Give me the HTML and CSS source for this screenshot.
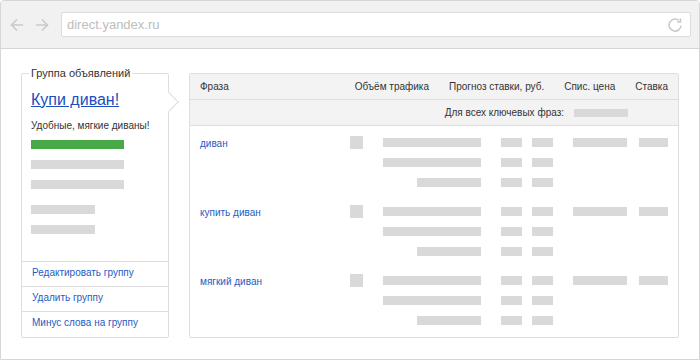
FILE: index.html
```html
<!DOCTYPE html>
<html lang="ru">
<head>
  <meta charset="UTF-8">
  <title>Яндекс.Директ — группа объявлений</title>
  <link rel="stylesheet" href="styles.css">
</head>
<body>
  <div class="browser">
    <header class="toolbar">
      <span class="nav-btn">
        <svg width="14" height="14" viewBox="0 0 14 14"><path d="M7 1.5 L1.5 7 L7 12.5 M1.5 7 H13" /></svg>
      </span>
      <span class="nav-btn">
        <svg width="14" height="14" viewBox="0 0 14 14"><path d="M7 1.5 L12.5 7 L7 12.5 M12.5 7 H1" /></svg>
      </span>
      <div class="address">
        <span class="url">direct.yandex.ru</span>
        <svg class="reload" width="16" height="16" viewBox="0 0 16 16"><path d="M14 8.5 A6 6 0 1 1 11.8 3.4 M13.5 1.5 V5 H10" /></svg>
      </div>
    </header>

    <main class="page">
      <!-- left: ad group card -->
      <aside class="group-card">
        <span class="group-legend">Группа объявлений</span>
        <div class="ad-preview">
          <a class="ad-title" href="#">Купи диван!</a>
          <p class="ad-text">Удобные, мягкие диваны!</p>
          <div class="stub stub-green"></div>
          <div class="stub"></div>
          <div class="stub"></div>
          <div class="stub stub-short stub-gap"></div>
          <div class="stub stub-short"></div>
        </div>
        <ul class="group-actions">
          <li><a href="#">Редактировать группу</a></li>
          <li><a href="#">Удалить группу</a></li>
          <li><a href="#">Минус слова на группу</a></li>
        </ul>
      </aside>

      <!-- right: phrases table -->
      <section class="phrases">
        <div class="phrases-head">
          <span>Фраза</span>
          <div class="head-cols">
            <span>Объём трафика</span>
            <span>Прогноз ставки, руб.</span>
            <span>Спис. цена</span>
            <span>Ставка</span>
          </div>
        </div>
        <div class="phrases-all">
          <span>Для всех ключевых фраз:</span>
          <span class="bar bar-price"></span>
        </div>

        <div class="phrases-body">
          <div class="kw-group">
            <a class="kw" href="#">диван</a>
            <span class="kw-check"></span>
            <span class="bar bar-traffic"></span>
            <span class="bar bar-bid"></span>
            <span class="bar bar-bid"></span>
            <span class="bar bar-price"></span>
            <span class="bar bar-rate"></span>
            <span class="bar bar-traffic new-line"></span>
            <span class="bar bar-bid"></span>
            <span class="bar bar-bid"></span>
            <span class="bar bar-traffic short new-line"></span>
            <span class="bar bar-bid"></span>
            <span class="bar bar-bid"></span>
          </div>
          <div class="kw-group">
            <a class="kw" href="#">купить диван</a>
            <span class="kw-check"></span>
            <span class="bar bar-traffic"></span>
            <span class="bar bar-bid"></span>
            <span class="bar bar-bid"></span>
            <span class="bar bar-price"></span>
            <span class="bar bar-rate"></span>
            <span class="bar bar-traffic new-line"></span>
            <span class="bar bar-bid"></span>
            <span class="bar bar-bid"></span>
            <span class="bar bar-traffic short new-line"></span>
            <span class="bar bar-bid"></span>
            <span class="bar bar-bid"></span>
          </div>
          <div class="kw-group">
            <a class="kw" href="#">мягкий диван</a>
            <span class="kw-check"></span>
            <span class="bar bar-traffic"></span>
            <span class="bar bar-bid"></span>
            <span class="bar bar-bid"></span>
            <span class="bar bar-price"></span>
            <span class="bar bar-rate"></span>
            <span class="bar bar-traffic new-line"></span>
            <span class="bar bar-bid"></span>
            <span class="bar bar-bid"></span>
            <span class="bar bar-traffic short new-line"></span>
            <span class="bar bar-bid"></span>
            <span class="bar bar-bid"></span>
          </div>
        </div>
      </section>
    </main>
  </div>
</body>
</html>
```

FILE: styles.css
```css
:root {
  --frame-border: #d6d6d6;
  --line-color: #dedede;
  --toolbar-bg: #f1f1f1;
  --head-bg: #f3f3f3;
  --stub-color: #d9d9d9;
  --green: #47a947;
  --link-color: #1f5bc4;
  --text-color: #333;
}

* {
  margin: 0;
  padding: 0;
  box-sizing: border-box;
}

body {
  font-family: "Liberation Sans", Arial, sans-serif;
  color: var(--text-color);
  background: #fff;
}

a {
  color: var(--link-color);
  text-decoration: none;
}

.browser {
  width: 700px;
  height: 360px;
  border: 1px solid var(--frame-border);
  border-radius: 4px 4px 0 0;
  display: flex;
  flex-direction: column;
  overflow: hidden;
}

/* browser chrome */
.toolbar {
  height: 48px;
  flex: none;
  display: flex;
  align-items: center;
  padding: 0 8px 0 9px;
  background: var(--toolbar-bg);
  border-bottom: 1px solid var(--frame-border);
}

.nav-btn {
  display: flex;
  width: 14px;
  height: 14px;
  margin-right: 11px;
}

.nav-btn + .nav-btn {
  margin-right: 12px;
}

.nav-btn path,
.reload path {
  fill: none;
  stroke: #cacaca;
  stroke-width: 1.6;
}

.address {
  flex: 1;
  height: 25px;
  display: flex;
  align-items: center;
  justify-content: space-between;
  padding: 0 7px 0 5px;
  background: #fff;
  border: 1px solid #dcdcdc;
  border-radius: 2px;
}

.url {
  font-size: 13px;
  color: #bdbdbd;
}

/* page */
.page {
  flex: 1;
  display: flex;
  gap: 20px;
  padding: 24px 20px 21px;
}

.group-card {
  position: relative;
  width: 148px;
  display: flex;
  flex-direction: column;
  border: 1px solid var(--line-color);
  border-radius: 2px;
}

.group-card::after {
  content: "";
  position: absolute;
  top: 21px;
  right: -8px;
  width: 13px;
  height: 13px;
  background: #fff;
  border-top: 1px solid var(--line-color);
  border-right: 1px solid var(--line-color);
  transform: rotate(45deg);
}

.group-legend {
  position: absolute;
  top: -8px;
  left: 7px;
  padding: 0 2px;
  background: #fff;
  font-size: 11px;
  line-height: 14px;
}

.ad-preview {
  padding: 16px 9px 0;
}

.ad-title {
  display: block;
  font-size: 16px;
  line-height: 20px;
  color: #1a4fbe;
  text-decoration: underline;
}

.ad-text {
  margin: 9px 0 7px;
  font-size: 10px;
  line-height: 14px;
}

.stub {
  width: 93px;
  height: 9px;
  margin-bottom: 11px;
  background: var(--stub-color);
}

.stub-green {
  background: var(--green);
}

.stub-short {
  width: 64px;
}

.stub-gap {
  margin-top: 16px;
}

.group-actions {
  margin-top: auto;
  padding-bottom: 1px;
  list-style: none;
}

.group-actions li {
  height: 25px;
  display: flex;
  align-items: center;
  padding: 0 0 4px 10px;
  border-top: 1px solid var(--line-color);
  font-size: 10px;
}

/* phrases table */
.phrases {
  flex: 1;
  display: flex;
  flex-direction: column;
  border: 1px solid var(--line-color);
  border-radius: 2px;
  font-size: 10px;
}

.phrases-head,
.phrases-all {
  height: 26px;
  display: flex;
  align-items: center;
  background: var(--head-bg);
  border-bottom: 1px solid var(--line-color);
}

.phrases-head {
  padding: 0 10px;
}

.head-cols {
  margin-left: auto;
  display: flex;
  gap: 20px;
}

.phrases-all {
  justify-content: flex-end;
  gap: 10px;
  padding-right: 50px;
}

.phrases-body {
  display: flex;
  flex-direction: column;
  gap: 20px;
  padding: 12px 10px 11px;
}

.kw-group {
  display: grid;
  grid-template-columns: 150px 13px 118px 41px 31px 74px 41px;
  grid-auto-rows: 9px;
  row-gap: 11px;
  align-items: center;
  justify-items: end;
}

.kw {
  justify-self: start;
  line-height: 13px;
  transform: translateY(1px);
}

.kw-check {
  width: 13px;
  height: 13px;
  background: var(--stub-color);
}

.bar {
  display: block;
  height: 9px;
  background: var(--stub-color);
}

.new-line {
  grid-column-start: 3;
}

.bar-traffic { width: 98px; }
.bar-traffic.short { width: 64px; }
.bar-bid { width: 21px; }
.bar-price { width: 54px; }
.bar-rate { width: 29px; }

.phrases-all .bar-price {
  height: 8px;
}
```
